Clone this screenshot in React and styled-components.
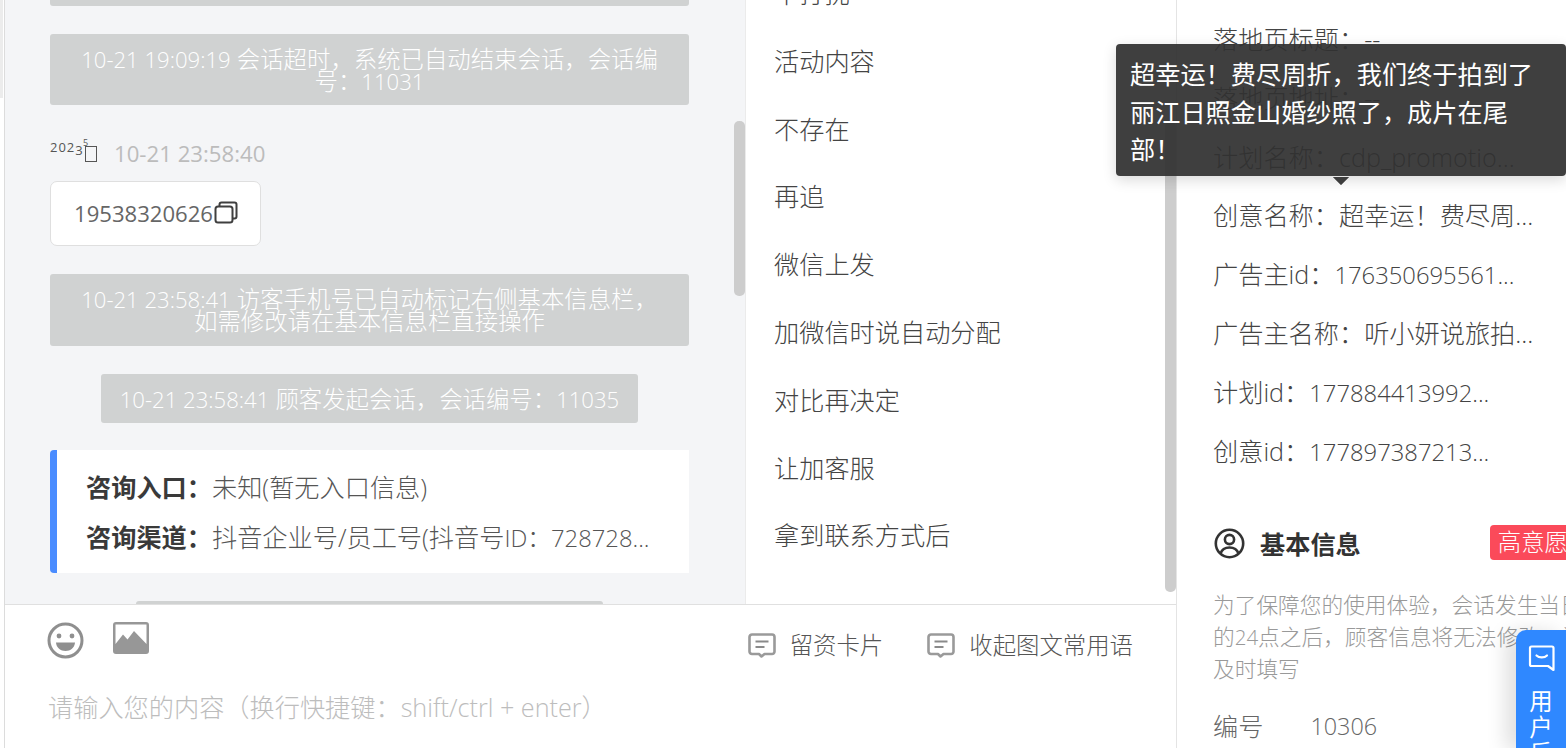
import React from "react";
import styled, { createGlobalStyle } from "styled-components";

const Global = createGlobalStyle`
  html, body { margin: 0; padding: 0; overflow: hidden; background: #fff; }
  * { box-sizing: border-box; }
  body { font-family: "Open Sans", "Noto Sans CJK SC", sans-serif; color: #333; }
`;

const Page = styled.div`
  width: 1566px; height: 748px; display: flex; overflow: hidden; position: relative; background: #fff;
`;
const EdgeStrip = styled.div`
  width: 5px; flex: none; border-right: 1px solid #dcdcdc;
  background: linear-gradient(to bottom, #ececec 0, #ececec 98px, #fff 98px);
  background-size: 3px 100%; background-repeat: no-repeat;
`;
const MainColumn = styled.div`
  width: 1172px; flex: none; display: flex; flex-direction: column; border-right: 1px solid #e4e4e4;
`;
const Panes = styled.div`
  height: 604px; flex: none; display: flex; overflow: hidden;
`;
const ChatPane = styled.div`
  width: 741px; flex: none; background: #f4f5f7; position: relative; overflow: hidden; border-right: 1px solid #ebebeb;
`;
const MessageList = styled.div`
  margin-top: -66px; padding: 0 56px 0 45px; display: flex; flex-direction: column; align-items: flex-start; gap: 28px;
`;
const Notice = styled.div`
  align-self: ${p => (p.$narrow ? "center" : "stretch")};
  background: #d0d2d2; color: #fff; border-radius: 3px; text-align: center;
  font-size: 23.4px; line-height: 22px; padding: 14.25px ${p => (p.$narrow ? 19 : 22)}px 13.25px; white-space: nowrap;
  font-weight: 300;
`;
const Num = styled.span`
  font-size: 0.945em;
`;
const VisitorBlock = styled.div`
  display: flex; flex-direction: column; gap: 13px; margin-top: 7px;
`;
const StampRow = styled.div`
  display: flex; align-items: center; height: 28px; gap: 16px;
`;
const YearGlyph = styled.span`
  display: flex; width: 48px; height: 28px; position: relative; font-size: 13px; line-height: 13px; color: #555;
  padding-top: 1px; letter-spacing: 1px;
`;
const YearLast = styled.span`
  margin-top: 3px;
`;
const YearScrap = styled.span`
  position: absolute; left: 33px; top: -2px; font-size: 9px; line-height: 9px; color: #555;
`;
const Tofu = styled.span`
  width: 12px; height: 16px; border: 1.6px solid #555; margin-top: 5px; margin-left: 1px;
`;
const Stamp = styled.span`
  font-size: 22.2px; color: #bcbcbc; line-height: 28px;
`;
const PhoneBubble = styled.div`
  width: 211px; height: 65px; background: #fff; border: 1px solid #dfdfdf; border-radius: 7px;
  display: flex; align-items: center; padding: 0 0 2px 23px; font-size: 22.1px; color: #666; white-space: nowrap;
`;
const InfoCard = styled.div`
  align-self: stretch; height: 123px; margin-top: -1px; background: #fff; border-left: 7px solid #4a8cff;
  border-radius: 4px 0 0 4px; padding: 19px 40px 0 29px; overflow: hidden;
`;
const InfoLine = styled.div`
  font-size: 25.2px; line-height: 36px; height: 50px; white-space: nowrap; color: #555; font-weight: 300;
`;
const InfoLabel = styled.b`
  font-weight: 700; color: #3a3a3a;
`;
const PhrasePane = styled.div`
  flex: 1; position: relative; overflow: hidden; background: #fff;
`;
const PhraseList = styled.div`
  margin-top: -40px; padding-left: 28px; display: flex; flex-direction: column;
`;
const PhraseItem = styled.div`
  height: 67.8px; line-height: 67.8px; font-size: 25.2px; color: #444; white-space: nowrap; font-weight: 300;
`;
const ScrollThumb = styled.div`
  position: absolute; background: #cdcdcd; border-radius: 5px; width: 11px;
  right: 0; top: ${p => p.$top}px; height: ${p => p.$h}px;
`;
const Composer = styled.div`
  flex: 1; border-top: 1px solid #e0e0e0; background: #fff; display: flex; flex-direction: column; padding-left: 43px;
`;
const ToolRow = styled.div`
  display: flex; height: 76px; align-items: flex-start; padding-top: 17px;
`;
const IconSlot = styled.div`
  width: 65px; flex: none; height: 38px; color: #8f8f8f;
`;
const Actions = styled.div`
  margin-left: auto; display: flex; gap: 44px; padding: 8px 43px 0 0;
`;
const ActionButton = styled.div`
  display: flex; align-items: center; gap: 14px; font-size: 23.4px; line-height: 30px; color: #555; white-space: nowrap; font-weight: 300;
`;
const Placeholder = styled.div`
  font-size: 25.2px; line-height: 34px; color: #bdbdbd; white-space: nowrap; margin-top: 9px; font-weight: 300;
`;
const SidePane = styled.div`
  flex: 1; min-width: 0; overflow: hidden; padding-left: 36px; background: #fff;
`;
const AttrList = styled.div`
  margin-top: 10px; display: flex; flex-direction: column;
`;
const AttrRow = styled.div`
  height: 58.8px; line-height: 58.8px; font-size: 25.2px; color: #444; white-space: nowrap; font-weight: 300;
`;
const SectionHead = styled.div`
  display: flex; align-items: center; margin-top: 45px; height: 36px; white-space: nowrap; width: 400px; padding-left: 1px;
`;
const SectionTitle = styled.div`
  font-size: 25.2px; font-weight: 700; color: #333; margin-left: 15px;
`;
const Tag = styled.span`
  margin-left: 129px; margin-bottom: 2px; background: #fb4a5a; color: #fff; font-size: 23.4px; line-height: 35px; height: 35px; padding: 0 8px; border-radius: 4px; font-weight: 300;
`;
const Hint = styled.div`
  margin-top: 28px; font-size: 21.7px; line-height: 32px; color: #999; white-space: nowrap; font-weight: 300;
`;
const SerialRow = styled.div`
  display: flex; margin-top: 21px; font-size: 25.2px; line-height: 40px; color: #666; white-space: nowrap; font-weight: 300;
`;
const SerialValue = styled.span`
  margin-left: 47px; font-size: 23.4px;
`;
const Tooltip = styled.div`
  position: absolute; left: 1116px; top: 44px; width: 450px; height: 132px; border-radius: 4px;
  background: rgba(48,48,48,.93); color: #fff; padding: 12px 14px; font-size: 25.2px; line-height: 37.5px;
  box-shadow: 0 4px 14px rgba(0,0,0,.15);
  &::after {
    content: ""; position: absolute; left: 219px; bottom: -7px; width: 12px; height: 12px;
    background: #3d3d3d; transform: rotate(45deg); clip-path: polygon(100% 0, 100% 100%, 0 100%); border-radius: 1px;
  }
`;
const Feedback = styled.div`
  position: absolute; left: 1516px; top: 630px; width: 50px; height: 118px;
  background: #2f88ff; border-radius: 10px 0 0 0; color: #fff; display: flex; flex-direction: column; align-items: center;
  padding-top: 15px; box-shadow: -10px 2px 20px rgba(0,0,0,.13); overflow: hidden;
`;
const FeedbackText = styled.div`
  margin-top: 16px; font-size: 23.4px; line-height: 26px; width: 24px; text-align: center;
`;
const SmileSlot = styled.span`
  display: block; margin-left: -1px;
`;

const CopyIcon = () => (
  <svg width="25" height="24" viewBox="0 0 25 24" fill="none" stroke="#3f3f3f" strokeWidth="2" style={{ flex: "none", marginLeft: 1 }}>
    <rect x="1.5" y="5.5" width="17" height="16" rx="2.5" />
    <path d="M5.5 5V3.5A2 2 0 0 1 7.5 1.5H20.500A2 2 0 0 1 22.500 3.500V15.500A2 2 0 0 1 20.500 17.500H18.500" />
  </svg>
);
const SmileIcon = () => (
  <svg width="37" height="37" viewBox="0 0 37 37" fill="none">
    <circle cx="18.500" cy="18.500" r="16.500" stroke="#8f8f8f" strokeWidth="3" />
    <circle cx="12" cy="14" r="2.400" fill="#8f8f8f" />
    <circle cx="25" cy="14" r="2.400" fill="#8f8f8f" />
    <path d="M9 20.500H28C27.500 26 23.500 29 18.500 29S9.500 26 9 20.500Z" fill="#8f8f8f" />
  </svg>
);
const ImageIcon = () => (
  <svg width="36" height="32" viewBox="0 0 36 32">
    <path fillRule="evenodd" fill="#979797" d="M3 0H33A3 3 0 0 1 36 3V29A3 3 0 0 1 33 32H3A3 3 0 0 1 0 29V3A3 3 0 0 1 3 0ZM2.500 2.500V22L10 12.500L14.500 17.500L21 9L33.500 22V2.500Z" />
  </svg>
);
const ChatIcon = () => (
  <svg width="28" height="25" viewBox="0 0 28 25" fill="none" style={{ flex: "none" }}>
    <path d="M4 1.500H24A2.500 2.500 0 0 1 26.500 4V18.500A2.500 2.500 0 0 1 24 21H16.500L13.500 23.500L11 21H4A2.500 2.500 0 0 1 1.500 18.500V4A2.500 2.500 0 0 1 4 1.500Z" stroke="#9a9a9a" strokeWidth="2.600" strokeLinejoin="round" />
    <path d="M7.500 8.500H20.500M7.500 14H16.500" stroke="#8a8a8a" strokeWidth="2" />
  </svg>
);
const UserIcon = () => (
  <svg width="31" height="31" viewBox="0 0 31 31" fill="none" stroke="#333" strokeWidth="2.600" style={{ flex: "none" }}>
    <circle cx="15.500" cy="15.500" r="13.700" />
    <circle cx="15.500" cy="11.500" r="4.600" />
    <path d="M6.500 25.500C8 21 11.500 19.500 15.500 19.500S23 21 24.500 25.500" />
  </svg>
);
const FeedbackIcon = () => (
  <svg width="27" height="27" viewBox="0 0 27 27" fill="none" stroke="#fff" strokeWidth="2.200" style={{ flex: "none" }}>
    <path d="M3.500 1.500H24A1.500 1.500 0 0 1 25.500 3V25L20 21H3.500A1.500 1.500 0 0 1 2 19.500V3A1.500 1.500 0 0 1 3.500 1.500Z" strokeLinejoin="round" />
    <path d="M8.500 10.500C11 13 16.500 13 19 10.500" strokeLinecap="round" />
  </svg>
);

const phrases = ["不打扰", "活动内容", "不存在", "再追", "微信上发", "加微信时说自动分配", "对比再决定", "让加客服", "拿到联系方式后"];
const attrs = [
  ["落地页标题：--", ""],
  ["落地页地址：--", ""],
  ["计划名称：cdp_promotio...", ""],
  ["创意名称：超幸运！费尽周...", ""],
  ["广告主id：", "176350695561..."],
  ["广告主名称：听小妍说旅拍...", ""],
  ["计划id：", "177884413992..."],
  ["创意id：", "177897387213..."],
];

export default function App() {
  return (
    <Page>
      <Global />
      <EdgeStrip />
      <MainColumn>
        <Panes>
          <ChatPane>
            <MessageList>
              <Notice><Num>10-21 19:09:19</Num> 会话超时，系统已自动结束会话<br />编号：<Num>11030</Num></Notice>
              <Notice><Num>10-21 19:09:19</Num> 会话超时，系统已自动结束会话，会话编<br />号：<Num>11031</Num></Notice>
              <VisitorBlock>
                <StampRow>
                  <YearGlyph>202<YearLast>3</YearLast><YearScrap>5</YearScrap><Tofu /></YearGlyph>
                  <Stamp>10-21 23:58:40</Stamp>
                </StampRow>
                <PhoneBubble>19538320626<CopyIcon /></PhoneBubble>
              </VisitorBlock>
              <Notice><Num>10-21 23:58:41</Num> 访客手机号已自动标记右侧基本信息栏，<br />如需修改请在基本信息栏直接操作</Notice>
              <Notice $narrow><Num>10-21 23:58:41</Num> 顾客发起会话，会话编号：<Num>11035</Num></Notice>
              <InfoCard>
                <InfoLine><InfoLabel>咨询入口：</InfoLabel>未知(暂无入口信息)</InfoLine>
                <InfoLine><InfoLabel>咨询渠道：</InfoLabel>抖音企业号/员工号(抖音号<Num>ID：728728...</Num></InfoLine>
              </InfoCard>
              <Notice $narrow><Num>10-21 23:58:42</Num> 已接入会话，编号：<Num>11036</Num></Notice>
            </MessageList>
            <ScrollThumb $top={121} $h={175} />
          </ChatPane>
          <PhrasePane>
            <PhraseList>
              {phrases.map(t => <PhraseItem key={t}>{t}</PhraseItem>)}
            </PhraseList>
            <ScrollThumb $top={122} $h={470} />
          </PhrasePane>
        </Panes>
        <Composer>
          <ToolRow>
            <IconSlot><SmileSlot><SmileIcon /></SmileSlot></IconSlot>
            <IconSlot><ImageIcon /></IconSlot>
            <Actions>
              <ActionButton><ChatIcon />留资卡片</ActionButton>
              <ActionButton><ChatIcon />收起图文常用语</ActionButton>
            </Actions>
          </ToolRow>
          <Placeholder>请输入您的内容（换行快捷键：shift/ctrl + enter）</Placeholder>
        </Composer>
      </MainColumn>
      <SidePane>
        <AttrList>
          {attrs.map(([label, digits]) => <AttrRow key={label}>{label}{digits && <Num>{digits}</Num>}</AttrRow>)}
        </AttrList>
        <SectionHead>
          <UserIcon />
          <SectionTitle>基本信息</SectionTitle>
          <Tag>高意愿</Tag>
        </SectionHead>
        <Hint>为了保障您的使用体验，会话发生当日<br />的<Num>24</Num>点之后，顾客信息将无法修改，请<br />及时填写</Hint>
        <SerialRow>编号<SerialValue>10306</SerialValue></SerialRow>
      </SidePane>
      <Tooltip>超幸运！费尽周折，我们终于拍到了丽江日照金山婚纱照了，成片在尾部！</Tooltip>
      <Feedback>
        <FeedbackIcon />
        <FeedbackText>用户反馈</FeedbackText>
      </Feedback>
    </Page>
  );
}
